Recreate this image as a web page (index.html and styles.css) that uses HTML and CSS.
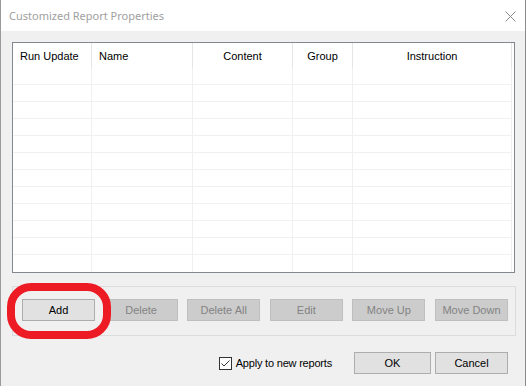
FILE: index.html
```html
<!DOCTYPE html>
<html>
<head>
  <title>Customized Report Properties</title>
  <link rel="stylesheet" href="styles.css">
</head>
<body>
  <div class="dialog">
    <div class="titlebar">
      <span class="title">Customized Report Properties</span>
      <svg class="close-icon" width="11" height="11" viewBox="0 0 11 11">
        <path d="M0.5 0.5 L10.5 10.5 M10.5 0.5 L0.5 10.5" stroke="#8a8a8a" stroke-width="1" fill="none"/>
      </svg>
    </div>

    <div class="dialog-body">
      <div class="report-list">
        <div class="list-row list-header">
          <div class="cell left">Run Update</div>
          <div class="cell left">Name</div>
          <div class="cell">Content</div>
          <div class="cell">Group</div>
          <div class="cell">Instruction</div>
        </div>
        <div class="list-row"><div class="cell"></div><div class="cell"></div><div class="cell"></div><div class="cell"></div><div class="cell"></div></div>
        <div class="list-row"><div class="cell"></div><div class="cell"></div><div class="cell"></div><div class="cell"></div><div class="cell"></div></div>
        <div class="list-row"><div class="cell"></div><div class="cell"></div><div class="cell"></div><div class="cell"></div><div class="cell"></div></div>
        <div class="list-row"><div class="cell"></div><div class="cell"></div><div class="cell"></div><div class="cell"></div><div class="cell"></div></div>
        <div class="list-row"><div class="cell"></div><div class="cell"></div><div class="cell"></div><div class="cell"></div><div class="cell"></div></div>
        <div class="list-row"><div class="cell"></div><div class="cell"></div><div class="cell"></div><div class="cell"></div><div class="cell"></div></div>
        <div class="list-row"><div class="cell"></div><div class="cell"></div><div class="cell"></div><div class="cell"></div><div class="cell"></div></div>
        <div class="list-row"><div class="cell"></div><div class="cell"></div><div class="cell"></div><div class="cell"></div><div class="cell"></div></div>
        <div class="list-row"><div class="cell"></div><div class="cell"></div><div class="cell"></div><div class="cell"></div><div class="cell"></div></div>
        <div class="list-row"><div class="cell"></div><div class="cell"></div><div class="cell"></div><div class="cell"></div><div class="cell"></div></div>
        <div class="list-row"><div class="cell"></div><div class="cell"></div><div class="cell"></div><div class="cell"></div><div class="cell"></div></div>
        <div class="list-row"><div class="cell"></div><div class="cell"></div><div class="cell"></div><div class="cell"></div><div class="cell"></div></div>
      </div>

      <div class="button-group">
        <button class="win-button">Add</button>
        <button class="win-button" disabled>Delete</button>
        <button class="win-button" disabled>Delete All</button>
        <button class="win-button" disabled>Edit</button>
        <button class="win-button" disabled>Move Up</button>
        <button class="win-button" disabled>Move Down</button>
        <div class="highlight-ring"></div>
      </div>

      <div class="footer">
        <label class="apply-check">
          <svg class="checkbox" width="13" height="13" viewBox="0 0 13 13">
            <rect x="0.5" y="0.5" width="12" height="12" fill="#fff" stroke="#333"/>
            <path d="M2.5 6.5 L5 9 L10.5 3.5" stroke="#333" stroke-width="1" fill="none"/>
          </svg>
          Apply to new reports
        </label>
        <button class="win-button ok-button">OK</button>
        <button class="win-button">Cancel</button>
      </div>
    </div>
  </div>
</body>
</html>
```

FILE: styles.css
```css
body {
  margin: 0;
  background-color: #f0f0f0;
  font-family: "Liberation Sans", Arial, sans-serif;
  font-size: 11px;
  color: #000;
}

.dialog {
  width: 526px;
  height: 386px;
  box-sizing: border-box;
  border-left: 1px solid #9a9a9a;
  border-right: 1px solid #8a8a8a;
  background-color: #f0f0f0;
}

.titlebar {
  height: 31px;
  background-color: #fff;
  display: flex;
  align-items: center;
  justify-content: space-between;
  padding: 0 9px 0 8px;
}

.title {
  font-family: "Noto Sans", sans-serif;
  font-size: 11px;
  color: #a0a0a0;
}

.close-icon {
  margin-top: 1px;
}

.dialog-body {
  padding: 11px 9px 0 11px;
}

.report-list {
  width: 503px;
  height: 231px;
  box-sizing: border-box;
  border: 1px solid #828790;
  background-color: #fff;
  overflow: hidden;
}

.list-row {
  display: grid;
  grid-template-columns: 79px 101px 100px 60px 159px;
  height: 17px;
  box-sizing: border-box;
  border-bottom: 1px solid #f0f0f0;
  width: 499px;
}

.list-row:last-child {
  border-bottom: none;
}

.list-row .cell {
  border-right: 1px solid #f0f0f0;
}

.list-header {
  height: 25px;
  border-bottom: none;
}

.list-header .cell {
  border-right: 1px solid #e5e5e5;
  text-align: center;
  line-height: 27px;
  margin-bottom: 1px;
}

.list-header .cell.left {
  text-align: left;
  padding-left: 7px;
}

.button-group {
  position: relative;
  margin-top: 13px;
  width: 504px;
  height: 50px;
  box-sizing: border-box;
  border: 1px solid #dcdcdc;
  padding: 12px 7px 0 9px;
  display: flex;
  justify-content: space-between;
  align-items: flex-start;
}

.win-button {
  width: 73px;
  height: 22px;
  box-sizing: border-box;
  background-color: #e1e1e1;
  border: 1px solid #adadad;
  font-family: "Liberation Sans", Arial, sans-serif;
  font-size: 11px;
  color: #000;
  padding: 0;
}

.win-button:disabled {
  background-color: #cccccc;
  border-color: #bfbfbf;
  color: #838383;
}

.highlight-ring {
  position: absolute;
  left: -6px;
  top: -4px;
  width: 104px;
  height: 56px;
  box-sizing: border-box;
  border: 8px solid #ed1c24;
  border-radius: 24px;
}

.footer {
  margin-top: 16px;
  display: flex;
  align-items: center;
  justify-content: flex-end;
  padding-right: 8px;
}

.apply-check {
  display: flex;
  align-items: center;
  gap: 4px;
  margin-right: 22px;
  letter-spacing: -0.2px;
}

.ok-button {
  width: 77px;
  margin-right: 4px;
}
```
